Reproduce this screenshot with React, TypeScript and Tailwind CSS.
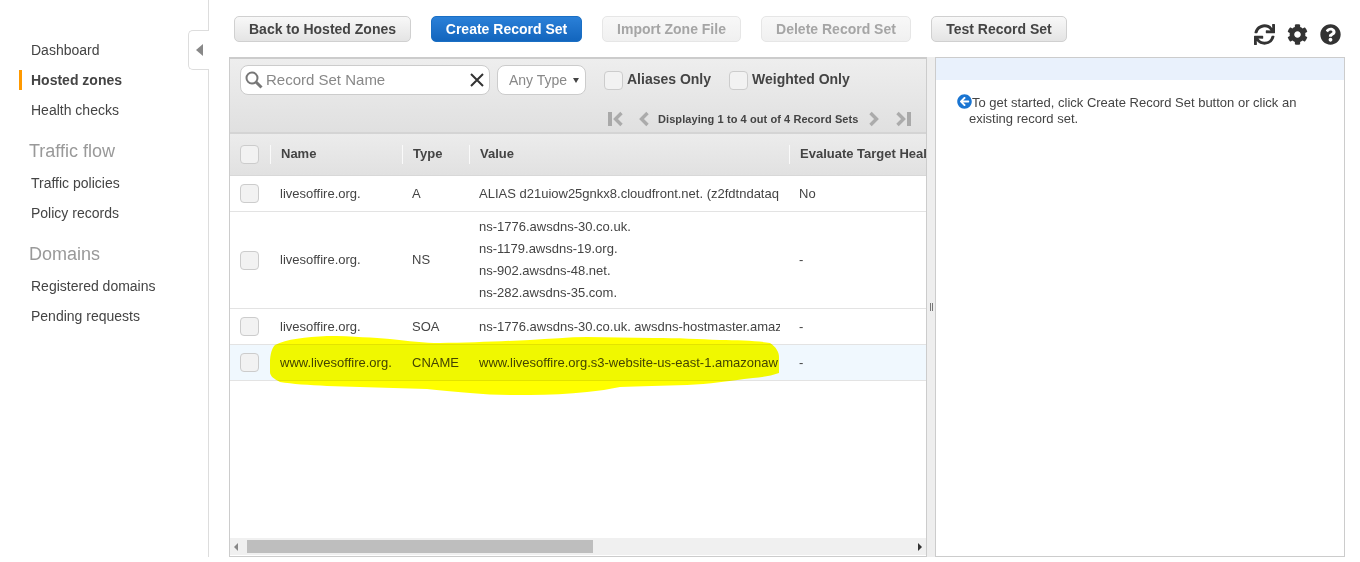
import { FaSync, FaCog, FaQuestionCircle, FaArrowCircleLeft } from 'react-icons/fa';

const navTop = ['Dashboard', 'Hosted zones', 'Health checks'];

function Check({ className = '' }: { className?: string }) {
    return <div className={`w-[19px] h-[19px] shrink-0 rounded-[4px] border border-[#ccc] bg-[#f2f2f2] ${className}`} />;
}

function ToolButton({ label, width, kind }: { label: string; width: string; kind: 'normal' | 'primary' | 'disabled' }) {
    const look = {
        normal: 'border-[#d0d0d0] bg-gradient-to-b from-[#f8f8f8] to-[#e4e4e4] text-[#444]',
        primary: 'border-[#1a6fc4] bg-gradient-to-b from-[#2a80d8] to-[#1265bd] text-white',
        disabled: 'border-[#e6e6e6] bg-gradient-to-b from-[#f8f8f8] to-[#f0f0f0] text-[#a5a5a5]',
    }[kind];
    return (
        <button className={`h-[26px] ${width} rounded-[5px] border text-[14px] font-bold leading-none ${look}`}>
            {label}
        </button>
    );
}

function Chevron({ flip }: { flip?: boolean }) {
    return (
        <svg width="12" height="16" viewBox="0 0 12 16" className={`shrink-0 ${flip ? 'scale-x-[-1]' : ''}`}>
            <path d="M9.5 2 L3.5 8 L9.5 14" fill="none" stroke="#ababab" strokeWidth="3.4" />
        </svg>
    );
}

function EndArrow({ flip }: { flip?: boolean }) {
    return (
        <svg width="16" height="16" viewBox="0 0 16 16" className={`shrink-0 ${flip ? 'scale-x-[-1]' : ''}`}>
            <rect x="0" y="1" width="4" height="14" fill="#a9a9a9" />
            <path d="M13.5 2 L7.5 8 L13.5 14" fill="none" stroke="#ababab" strokeWidth="3.4" />
        </svg>
    );
}

function Row({ name, type, value, target, h, multi, selected }: { name: string; type: string; value: string[]; target: string; h: string; multi?: boolean; selected?: boolean }) {
    return (
        <div className={`flex items-center ${h} border-b border-[#e3e3e3] text-[13px] text-[#444] ${selected ? 'bg-[#f0f8fe]' : ''}`}>
            <div className="w-[40px] pl-[10px] shrink-0"><Check /></div>
            <div className="w-[132px] pl-[10px] shrink-0 whitespace-nowrap overflow-hidden">{name}</div>
            <div className="w-[67px] pl-[10px] shrink-0">{type}</div>
            <div className={`w-[320px] pl-[10px] pr-[9px] shrink-0 overflow-hidden whitespace-nowrap ${multi ? 'leading-[22px]' : ''}`}>
                {value.map(v => <div key={v} className="overflow-hidden">{v}</div>)}
            </div>
            <div className="pl-[10px]">{target}</div>
        </div>
    );
}

export default function App() {
    return (
        <div className="relative flex w-[1360px] h-[562px] overflow-hidden bg-white font-['Liberation_Sans',Arial,sans-serif] text-[#444]">
            {/* sidebar */}
            <aside className="relative w-[209px] h-[557px] shrink-0 border-r border-[#ddd] pt-[35px] text-[14px]">
                {navTop.map(n => (
                    <div key={n} className="relative h-[30px] pl-[31px] leading-[30px]">
                        {n === 'Hosted zones' && <span className="absolute left-[19px] top-[5px] w-[3px] h-[20px] bg-[#f90]" />}
                        <span className={n === 'Hosted zones' ? 'font-bold' : ''}>{n}</span>
                    </div>
                ))}
                <div className="pl-[29px] mt-[11px] h-[30px] text-[18px] leading-[30px] text-[#999]">Traffic flow</div>
                <div className="pl-[31px] mt-[2px] h-[30px] leading-[30px]">Traffic policies</div>
                <div className="pl-[31px] h-[30px] leading-[30px]">Policy records</div>
                <div className="pl-[29px] mt-[11px] h-[30px] text-[18px] leading-[30px] text-[#999]">Domains</div>
                <div className="pl-[31px] mt-[2px] h-[30px] leading-[30px]">Registered domains</div>
                <div className="pl-[31px] h-[30px] leading-[30px]">Pending requests</div>
                {/* collapse tab */}
                <div className="absolute left-[188px] top-[30px] flex items-center justify-center w-[21px] h-[40px] rounded-l-[5px] border border-r-0 border-[#ddd] bg-white">
                    <span className="w-0 h-0 border-y-[6px] border-y-transparent border-r-[7px] border-r-[#888]" />
                </div>
            </aside>

            <main className="flex-1 pl-[20px]">
                {/* toolbar */}
                <div className="flex items-start h-[57px] pt-[16px] pl-[5px]">
                    <div className="flex gap-[20px]">
                        <ToolButton label="Back to Hosted Zones" width="w-[177px]" kind="normal" />
                        <ToolButton label="Create Record Set" width="w-[151px]" kind="primary" />
                        <ToolButton label="Import Zone File" width="w-[139px]" kind="disabled" />
                        <ToolButton label="Delete Record Set" width="w-[150px]" kind="disabled" />
                        <ToolButton label="Test Record Set" width="w-[136px]" kind="normal" />
                    </div>
                    <div className="flex items-center gap-[12px] ml-[187px] mt-[8px] text-[#333]">
                        <FaSync size={21} />
                        <FaCog size={21} />
                        <FaQuestionCircle size={21} />
                    </div>
                </div>

                <div className="flex h-[500px]">
                    {/* records panel */}
                    <div className="relative flex flex-col w-[698px] border border-[#ccc] border-t-[2px] overflow-hidden">
                        <div className="h-[75px] shrink-0 bg-gradient-to-b from-[#eeeeee] to-[#e0e0e0] border-b-[2px] border-[#d4d4d4] pl-[10px] pt-[6px]">
                            <div className="flex items-start">
                                <div className="flex items-center w-[250px] h-[30px] rounded-[8px] border border-[#ccc] bg-white pl-[4px] pr-[5px] text-[#888] text-[15px]">
                                    <svg width="18" height="18" viewBox="0 0 18 18" className="shrink-0">
                                        <circle cx="7" cy="7" r="5.5" fill="none" stroke="#777" strokeWidth="2" />
                                        <path d="M11 11 L16.5 16.5" stroke="#777" strokeWidth="3" />
                                    </svg>
                                    <span className="ml-[3px] flex-1">Record Set Name</span>
                                    <svg width="14" height="14" viewBox="0 0 14 14"><path d="M1 1 L13 13 M13 1 L1 13" stroke="#333" strokeWidth="2" /></svg>
                                </div>
                                <div className="flex items-center w-[89px] h-[30px] ml-[7px] rounded-[8px] border border-[#ccc] bg-white pl-[11px] text-[14px] text-[#888]">
                                    Any Type
                                    <span className="ml-[6px] w-0 h-0 border-x-[3px] border-x-transparent border-t-[5px] border-t-[#444]" />
                                </div>
                                <div className="flex items-start ml-[18px] mt-[6px] text-[14px] font-bold leading-[16px]">
                                    <Check className="mr-[4px]" />
                                    <span>Aliases Only</span>
                                    <Check className="ml-[18px] mr-[4px]" />
                                    <span>Weighted Only</span>
                                </div>
                            </div>
                            <div className="flex items-center ml-[368px] mt-[16px] text-[11px] font-bold">
                                <EndArrow />
                                <span className="w-[14px] shrink-0" />
                                <Chevron />
                                <span className="w-[201px] shrink-0 mx-[8px] whitespace-nowrap tracking-[0.08px]">Displaying 1 to 4 out of 4 Record Sets</span>
                                <span className="w-[1px] shrink-0" />
                                <Chevron flip />
                                <span className="w-[15px] shrink-0" />
                                <EndArrow flip />
                            </div>
                        </div>
                        <div className="flex items-center h-[42px] shrink-0 bg-gradient-to-b from-[#ececec] to-[#e1e1e1] border-b border-[#d8d8d8] text-[13px] font-bold leading-[18px] whitespace-nowrap">
                            <div className="w-[40px] pl-[10px] shrink-0"><Check /></div>
                            <div className="w-[132px] pl-[10px] shrink-0 h-[19px] border-l border-[#fafafa]">Name</div>
                            <div className="w-[67px] pl-[10px] shrink-0 h-[19px] border-l border-[#fafafa]">Type</div>
                            <div className="w-[320px] pl-[10px] shrink-0 h-[19px] border-l border-[#fafafa]">Value</div>
                            <div className="pl-[10px] h-[19px] border-l border-[#fafafa]">Evaluate Target Heal</div>
                        </div>
                        <Row h="h-[36px]" name="livesoffire.org." type="A" value={['ALIAS d21uiow25gnkx8.cloudfront.net. (z2fdtndataq']} target="No" />
                        <Row h="h-[97px]" multi name="livesoffire.org." type="NS" value={['ns-1776.awsdns-30.co.uk.', 'ns-1179.awsdns-19.org.', 'ns-902.awsdns-48.net.', 'ns-282.awsdns-35.com.']} target="-" />
                        <Row h="h-[36px]" name="livesoffire.org." type="SOA" value={['ns-1776.awsdns-30.co.uk. awsdns-hostmaster.amaz']} target="-" />
                        <Row h="h-[36px]" selected name="www.livesoffire.org." type="CNAME" value={['www.livesoffire.org.s3-website-us-east-1.amazonaw']} target="-" />
                        {/* horizontal scrollbar */}
                        <div className="mt-auto mb-[1px] flex items-center h-[17px] bg-[#f0f0f0] pl-[4px] pr-[4px]">
                            <span className="w-0 h-0 border-y-[4px] border-y-transparent border-r-[4px] border-r-[#888]" />
                            <div className="ml-[9px] w-[346px] h-[13px] bg-[#bebebe]" />
                            <span className="ml-auto w-0 h-0 border-y-[4px] border-y-transparent border-l-[4px] border-l-[#333]" />
                        </div>
                    </div>

                    {/* splitter */}
                    <div className="flex items-center justify-center w-[8px] shrink-0 bg-[#eeeeee]">
                        <span className="w-[3px] h-[8px] border-x border-[#777]" />
                    </div>

                    {/* detail panel */}
                    <div className="w-[410px] shrink-0 border border-[#ccc]">
                        <div className="h-[22px] bg-[#e9f1fc]" />
                        <div className="pl-[33px] pr-[30px] pt-[14px] text-[13px] leading-[16px] -indent-[12px]">
                            <FaArrowCircleLeft size={15} className="inline-block text-[#1a75d2] align-[-2px]" />
                            To get started, click Create Record Set button or click an existing record set.
                        </div>
                    </div>
                </div>
            </main>

            {/* marker scribble on top of the CNAME row */}
            <svg className="absolute left-[264px] top-[330px] mix-blend-multiply" width="520" height="70" viewBox="0 0 520 70">
                <path d="M6 33 C6 24 8 18 11 15 C22 9 42 7 63 6 C90 6 110 8 126 9 C145 11 160 13 176 13 C205 13 240 11 266 10 C285 9 305 7 323 7 L389 8 C415 8 435 9 456 10 C475 10 495 11 506 13 C512 17 515 22 515 27 L515 43 C507 46 498 47 489 48 C465 51 445 54 423 55 C400 56 375 56 356 57 C345 59 335 61 323 62 C305 64 285 65 266 65 C245 65 225 65 206 63 C190 62 175 60 163 59 C130 58 95 57 63 56 C45 55 28 54 16 52 C10 49 6 46 6 42 Z" fill="#ffff00" />
            </svg>
        </div>
    );
}
